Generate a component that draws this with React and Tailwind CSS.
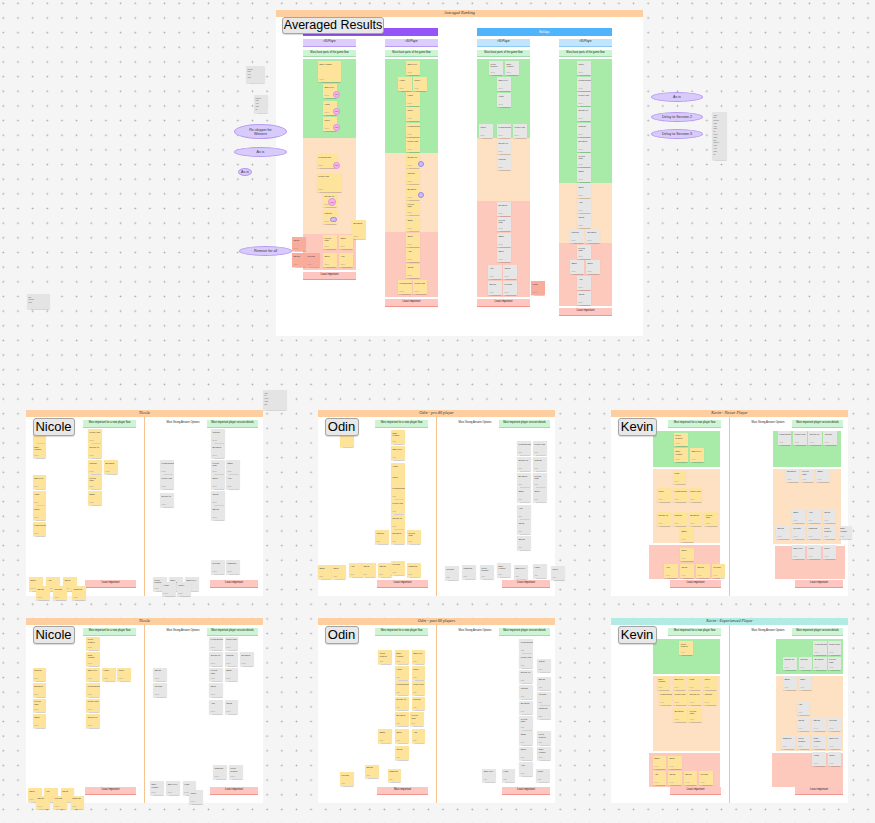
import React from "react";

const YEL = "#fee39a";
const GRY = "#e6e6e6";
const SAL = "#f9ab9c";
const GREEN = "#a8eba9";
const ORANGE = "#fee1c3";
const RED = "#fdc9bd";

const WORDS = [
  "Lives system", "Daily reward", "Skip level", "Hints", "Timer", "Leaderboard",
  "Power-ups", "Sound on", "Tutorial", "Boosters", "Levels map", "Stars",
  "Shop", "Ads", "Chest", "Streak", "Friends", "Missions",
];
const SHORT = ["idea", "note", "ok", "tbd", "yes", "keep", "maybe", "later"];

function Sticky({ x, y, c = YEL, w = 13.5, h = 13.5, i = 0, who = "Nicole", blank = false }) {
  return (
    <div
      className="absolute overflow-hidden px-[1.5px] pt-[1.5px] shadow-[0_0.5px_1px_rgba(0,0,0,0.18)]"
      style={{ left: x, top: y, width: w, height: h, background: c }}
    >
      {!blank && <div className="text-[2.2px] leading-[2.8px] text-[#333]">{WORDS[i % WORDS.length]}</div>}
      {!blank && <div className="absolute bottom-[1px] left-[1.5px] text-[1.6px] leading-[2px] text-[#999]">{who}</div>}
    </div>
  );
}

const PILL = {
  green: "bg-[#cdf4d3] border-b-[0.5px] border-[#9fdcae]",
  red: "bg-[#fec6c0] border-b-[1px] border-[#f1958c]",
  purple: "bg-[#dccdfc] border-b-[1px] border-[#b69af3]",
  blue: "bg-[#c0e5fd] border-b-[0.5px] border-[#8ccaf5]",
};

function Pill({ kind = "green", text, className = "" }) {
  return (
    <div className={"flex shrink-0 items-center justify-center text-[2.6px] leading-none text-[#222] " + PILL[kind] + " " + className}>
      {text}
    </div>
  );
}

function Label({ text, className = "" }) {
  return (
    <div
      className={"absolute flex items-center justify-center whitespace-nowrap rounded-[3px] border border-[#a5a5a5] bg-[#e8e8e8] text-black shadow-[0_1px_1px_rgba(0,0,0,0.15)] " + className}
      style={{ fontFamily: '"Liberation Sans", Arial, sans-serif' }}
    >
      {text}
    </div>
  );
}

function Ellipse({ x, y, w, h, text }) {
  return (
    <div
      className="absolute flex items-center justify-center rounded-[50%] border-[0.5px] border-[#b59af0] bg-[#d9cafc] text-center text-[3.6px] leading-[4px] text-[#333]"
      style={{ left: x, top: y, width: w, height: h }}
    >
      {text}
    </div>
  );
}

function Circle({ x, y, s = 7, c = "#f5b3ef", text = "Vote" }) {
  return (
    <div
      className="absolute flex items-center justify-center rounded-full border-[0.5px] border-[#e58fdc] text-[1.8px] text-[#444]"
      style={{ left: x, top: y, width: s, height: s, background: c }}
    >
      {text}
    </div>
  );
}

function Dot({ x, y }) {
  return (
    <div
      className="absolute h-[6px] w-[6px] rounded-full border-[0.5px] border-[#9f86ee] bg-[#cbbcfb]"
      style={{ left: x, top: y }}
    />
  );
}

function Note({ x, y, w, h }) {
  const lines = Math.max(1, Math.floor((h - 4) / 2.8));
  return (
    <div
      className="absolute flex flex-col gap-[0.6px] overflow-hidden bg-[#e4e4e4] p-[1.5px] shadow-[0_0.5px_1px_rgba(0,0,0,0.12)]"
      style={{ left: x, top: y, width: w, height: h }}
    >
      {Array.from({ length: lines }).map((_, k) => (
        <div key={k} className="text-[1.8px] leading-[2.2px] text-[#555]">
          {SHORT[(k * 3 + x) % SHORT.length]}
        </div>
      ))}
    </div>
  );
}

function Frame({ x, y, w, h, title, hc = "#fdcfa0", children }) {
  return (
    <div className="absolute flex flex-col bg-white" style={{ left: x, top: y, width: w, height: h }}>
      <div
        className="flex h-[7px] shrink-0 items-center justify-center text-[4.2px] italic text-[#333]"
        style={{ background: hc, fontFamily: '"Liberation Serif", serif' }}
      >
        {title}
      </div>
      {children}
    </div>
  );
}

/* zones stacked in flow: [offsetX, width, height] for green, orange, red */
function ZoneStack({ zones }) {
  if (!zones) return <div className="flex-1" />;
  const colors = [GREEN, ORANGE, RED];
  return (
    <div className="mt-[3px] flex flex-1 flex-col gap-[2px]">
      {zones.map((z, k) => (
        <div key={k} style={{ marginLeft: z[0], width: z[1], height: z[2], background: colors[k] }} />
      ))}
    </div>
  );
}

function PersonFrame({
  x, y, h = 186, title, hc, name, labelCls, yel, gry, zl, zr, leftRed = "Least important", who,
}) {
  return (
    <Frame x={x} y={y} w={237} h={h} title={title} hc={hc}>
      <div className="relative flex flex-1">
        {/* left half */}
        <div className="flex w-[118px] flex-col pb-[8px] pt-[3px]">
          <Pill kind="green" text="Most important for a new player flow" className="ml-[57px] h-[7.5px] w-[53px]" />
          <ZoneStack zones={zl} />
          <Pill kind="red" text={leftRed} className="ml-[59px] h-[8px] w-[51px]" />
        </div>
        <div className="w-[1px] bg-[#f7c38e]" />
        {/* right half */}
        <div className="flex flex-1 flex-col pb-[8px] pt-[3px]">
          <div className="flex items-center justify-between pl-[17px] pr-[5px]">
            <div className="w-[42px] text-center text-[2.6px] leading-none text-[#222]">Most Strong Answer Options</div>
            <Pill kind="green" text="Most important player session details" className="h-[7.5px] w-[51px]" />
          </div>
          <ZoneStack zones={zr} />
          <div className="flex justify-end pr-[5px]">
            <Pill kind="red" text="Least important" className="h-[8px] w-[48px]" />
          </div>
        </div>
      </div>
      <div className="absolute inset-0">
        {yel.map((p, k) => (
          <Sticky key={"y" + k} x={p[0]} y={p[1]} i={k} who={who} blank={p[1] < 26 && p[0] < 50} />
        ))}
        {gry.map((p, k) => (
          <Sticky key={"g" + k} x={p[0]} y={p[1]} c={GRY} i={k + 5} who={who} />
        ))}
      </div>
      <Label text={name} className={"left-[6.5px] top-[8px] h-[17.5px] text-[13px] " + labelCls} />
    </Frame>
  );
}

/* ---------- data ---------- */
const nicole1 = {
  yel: [[6.7,19],[6.7,34],[6.7,65],[6.7,81],[6.7,96],[6.7,112],[62,19],[62,34],[62,50],[78,50],[62,65],[62,81],[3,167],[20,167],[37,167],[10,176],[27,176],[46,176]],
  gry: [[134,50],[134,65],[134,83],[185,19],[185,34],[185,50],[200,50],[185,65],[200,65],[185,81],[185,96],[185,150],[200,150],[127,167],[143,167],[159,167],[136,172],[151,172]],
};
const odin1 = {
  yel: [[22,23],[73,20],[73,36],[73,53],[73,64],[73,75],[73,90],[73,105],[57,120],[73,120],[89,120],[0,155],[14,155],[31,153],[44,153],[60,153],[73,151],[89,153]],
  gry: [[199,31],[215,31],[199,47],[215,47],[199,63],[215,63],[199,78],[215,78],[199,95],[199,110],[199,126],[127,156],[144,155],[162,155],[179,153],[196,155],[215,154],[233,156]],
};
const kevin1 = {
  zl: [[41.7, 67.3, 36], [41.7, 67.3, 74.3], [38.3, 70.7, 34.3]],
  zr: [[43, 68, 36], [43, 68, 75], [44.7, 70.3, 33.7]],
  yel: [[63,22.7],[63,38.3],[79,38.3],[61.7,60.7],[46,78],[62,78],[77.7,78],[46,102],[62,102],[77.7,102],[93.3,102],[69,118],[69,137.7],[53.3,154],[69,154],[85,154],[100.7,154]],
  gry: [[166.7,21],[182.3,21],[197.3,21],[212.3,21],[174.7,58.7],[189.7,58.7],[205,58.7],[180.7,99.3],[196,99.3],[211.7,99.3],[165,115.7],[180.7,115.7],[196,115.7],[211.7,115.7],[227.7,115.7],[180.7,135.3],[196,135.3],[211.7,135.3]],
};
const nicole2 = {
  yel: [[60.3,18.7],[60.3,34],[60.3,49.7],[76,49.7],[91.3,49.7],[60.3,65.3],[60.3,80.7],[60.3,96],[6.7,49.7],[6.7,65.3],[6.7,80.7],[6.7,96],[2,170],[18,170],[34.7,170],[10,177.7],[27.3,177.7],[44.7,177.7]],
  gry: [[183.3,18.7],[198.7,18.7],[183.3,34],[198.7,34],[214,34],[183.3,49.7],[198.7,49.7],[183.3,65.3],[183.3,82.3],[198.7,82.3],[127.3,49.7],[127.3,65.3],[187,147.3],[203,147.3],[124,163.3],[140.3,163.3],[156.7,163.3],[163.3,172]],
};
const odin2 = {
  yel: [[60.3,32.3],[77,32.3],[93.7,32.3],[77,48],[93.7,48],[77,63.3],[93.7,63.3],[77,78.7],[93.7,78.7],[77,94.3],[92,94.3],[60.3,111.3],[77,111.3],[93.7,111.3],[77,128],[47,146.7],[22,154],[69.7,150.7]],
  gry: [[201.3,21],[201.3,36],[201.3,51.7],[201.3,67],[201.3,82.7],[201.3,98],[201.3,113.3],[201.3,128.7],[201.3,144],[219.3,40.7],[219.3,58.7],[219.3,73.7],[219.3,87.7],[219.3,113.3],[219.3,128.7],[164.3,150.7],[183.7,150.7],[218.3,150.7]],
};
const kevin2 = {
  zl: [[41.7, 67.3, 35.3], [41.7, 67.3, 75], [38.3, 70.7, 34]],
  zr: [[45.7, 67.3, 35.6], [45.7, 67.3, 74.7], [42, 71, 34]],
  yel: [[68.3,23],[45.7,58],[61.7,58],[76.7,58],[92.3,58],[47.7,73.3],[62.3,73.3],[77.3,73.3],[92.3,73.3],[62.3,90],[77.3,90],[41.7,137.7],[57,137.7],[41.7,153.3],[57,153.3],[72.7,153.3],[88,153.3]],
  gry: [[202.3,23],[216.7,23],[172,38.7],[187.7,38.7],[202.3,38.7],[216.7,38.7],[172,58],[187.7,58],[185.7,83.7],[185.7,99.7],[201.3,99.7],[216.7,99.7],[170.3,117.3],[185.7,117.3],[201.3,117.3],[216.7,117.3],[201.3,134],[216.7,134]],
};

/* top frame columns: heights of green, orange, red */
const groups = [
  { bar: "bg-[#9554f7]", text: "", kind: "purple", cols: [[79, 96, 36], [94, 79, 65]] },
  { bar: "bg-[#4fb4fb]", text: "BizDays", kind: "blue", cols: [[79, 63, 96], [124, 60, 63]] },
];
const c2y = [51, 82, 97, 113, 128, 144, 160, 176, 191, 207, 223, 238, 254];
const c3g = [[213,51],[229,51],[221,67],[221,83],[203,114],[221,114],[237,114],[221,130],[221,146],[221,192],[221,207],[221,223],[221,238],[212,255],[227,255],[212,271],[227,271]];
const c4y = [51, 67, 82, 97, 113, 128, 143, 158, 174, 189, 204];
const c4g = [[294,219],[310,219],[301,235],[294,250],[310,250],[301,266],[301,281]];

function TopFrame() {
  return (
    <Frame x={276} y={10} w={367} h={326} title="Averaged Ranking">
      <div className="flex gap-[39px] pl-[27px] pt-[11px]">
        {groups.map((g, gi) => (
          <div key={gi} className="flex w-[135px] flex-col">
            <div className={"flex h-[8px] items-center justify-center text-[2.8px] text-white " + g.bar}>{g.text}</div>
            <div className="mt-[3px] flex gap-[29px]">
              {g.cols.map((z, ci) => (
                <div key={ci} className="flex w-[53px] flex-col">
                  <Pill kind={g.kind} text="<80 Player" className="h-[8px]" />
                  <Pill kind="green" text="Must-have parts of the game flow" className="mt-[3px] h-[7px]" />
                  <div className="mt-[2px] flex flex-col">
                    <div style={{ height: z[0], background: GREEN }} />
                    <div style={{ height: z[1], background: ORANGE }} />
                    <div style={{ height: z[2], background: RED }} />
                  </div>
                  <Pill kind="red" text="Least important" className="mt-[2px] h-[8px]" />
                </div>
              ))}
            </div>
          </div>
        ))}
      </div>

      <div className="absolute inset-0">
        {/* column 1 */}
        <Sticky x={42} y={51} w={23} h={21} i={1} />
        <Sticky x={47} y={74} i={2} />
        <Sticky x={47} y={91} i={3} />
        <Sticky x={47} y={107} i={4} />
        <Sticky x={41} y={144} w={20} i={5} />
        <Sticky x={41} y={163} w={25} h={19} i={6} />
        <Sticky x={47} y={183} i={7} />
        <Sticky x={47} y={200} i={8} />
        <Sticky x={76} y={210} w={14} h={19} i={9} />
        <Sticky x={47} y={225} i={10} />
        <Sticky x={63} y={225} i={11} />
        <Sticky x={47} y={243} i={12} />
        <Sticky x={63} y={243} i={13} />
        <Sticky x={16} y={227} c={SAL} i={14} />
        <Sticky x={16} y={243} c={SAL} i={15} />
        <Sticky x={30} y={243} c={SAL} i={16} />
        <Circle x={57} y={81} />
        <Circle x={57} y={98} />
        <Circle x={57} y={114} />
        <Circle x={57} y={152} />
        <Circle x={52} y={188} s={8} />
        <div className="absolute left-[54px] top-[207px] h-[5px] w-[7px] rounded-full border-[0.5px] border-[#9f86ee] bg-[#cbbcfb]" />
        {/* column 2 */}
        {c2y.map((yy, k) => (
          <Sticky key={"c2" + k} x={130} y={yy} i={k + 2} />
        ))}
        <Sticky x={122} y={67} i={3} />
        <Sticky x={137} y={67} i={4} />
        <Sticky x={122} y={270} i={5} />
        <Sticky x={137} y={270} i={6} />
        <Dot x={142} y={151} />
        <Dot x={142} y={182} />
        {/* column 3 */}
        {c3g.map((p, k) => (
          <Sticky key={"c3" + k} x={p[0]} y={p[1]} c={GRY} i={k} />
        ))}
        <Sticky x={255} y={271} c={SAL} i={3} />
        {/* column 4 */}
        {c4y.map((yy, k) => (
          <Sticky key={"c4" + k} x={301} y={yy} c={GRY} i={k + 4} />
        ))}
        {c4g.map((p, k) => (
          <Sticky key={"c4g" + k} x={p[0]} y={p[1]} c={GRY} i={k + 8} />
        ))}
      </div>
      <Label text="Averaged Results" className="left-[6px] top-[7px] h-[17px] w-[102px] text-[12.5px]" />
    </Frame>
  );
}

export default function App() {
  return (
    <div
      className="relative h-[823px] w-[875px] overflow-hidden bg-[#f5f5f5] bg-[radial-gradient(circle,#a9a9a9_0.75px,transparent_1.1px)] bg-[length:14.67px_14.67px] bg-[position:-4px_-4px]"
      style={{ fontFamily: '"Liberation Sans", Arial, sans-serif' }}
    >
      <TopFrame />

      {/* loose items around the top frame */}
      <Note x={246} y={66} w={19} h={17} />
      <Note x={254} y={95} w={14} h={18} />
      <Ellipse x={234} y={124} w={53} h={15} text={<span>Re-skipper for<br />Winners</span>} />
      <Ellipse x={234} y={147} w={53} h={10} text="As is" />
      <Ellipse x={238} y={168} w={14} h={8} text="As is" />
      <Ellipse x={239} y={246} w={53} h={10} text="Remove for all" />
      <Ellipse x={651} y={92} w={52} h={10} text="As is" />
      <Ellipse x={651} y={112} w={52} h={10} text="Delay to Session 2" />
      <Ellipse x={651} y={129} w={52} h={10} text="Delay to Session 3" />
      <Note x={712} y={112} w={15} h={48} />
      <Note x={27} y={294} w={23} h={15} />
      <Note x={263} y={390} w={24} h={20} />

      <PersonFrame x={26} y={410} title="Nicole" name="Nicole" labelCls="w-[42px]" who="Nicole" {...nicole1} />
      <PersonFrame x={318} y={410} title="Odin - pro 40 player" name="Odin" labelCls="w-[34px]" who="Odin" {...odin1} />
      <PersonFrame x={611} y={410} title="Kevin - Newer Player" name="Kevin" labelCls="w-[39px]" who="Kevin" {...kevin1} />

      <PersonFrame x={26} y={618} h={185} title="Nicole" name="Nicole" labelCls="w-[42px]" who="Nicole" {...nicole2} />
      <PersonFrame x={318} y={618} h={185} title="Odin - past 60 players" name="Odin" labelCls="w-[34px]" who="Odin" leftRed="Most important" {...odin2} />
      <PersonFrame x={611} y={618} h={185} title="Kevin - Experienced Player" hc="#b2ebe4" name="Kevin" labelCls="w-[39px]" who="Kevin" {...kevin2} />
    </div>
  );
}
